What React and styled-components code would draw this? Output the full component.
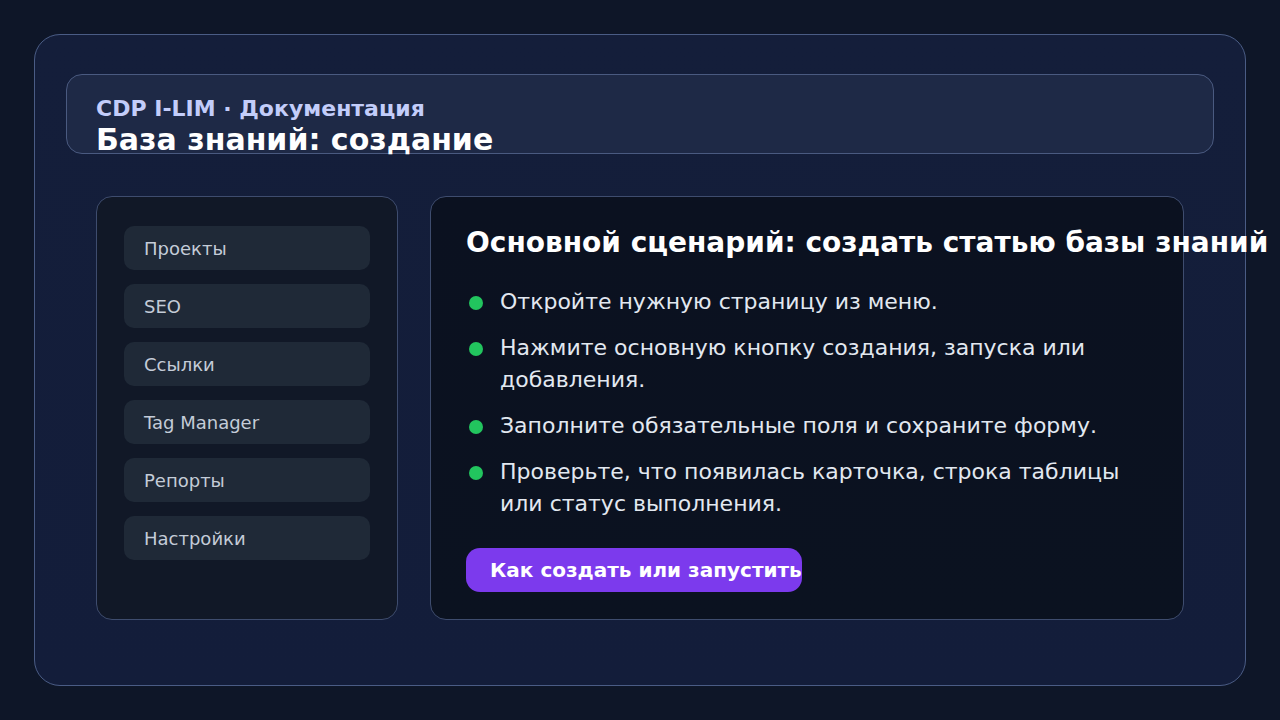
import React from 'react';
import styled, { createGlobalStyle } from 'styled-components';

const GlobalStyle = createGlobalStyle`
  html, body {
    margin: 0;
    padding: 0;
    background: #0e1628;
  }
  body {
    font-family: "DejaVu Sans", Verdana, sans-serif;
    width: 1280px;
    height: 720px;
    overflow: hidden;
  }
`;

const menu = ['Проекты', 'SEO', 'Ссылки', 'Tag Manager', 'Репорты', 'Настройки'];

const steps = [
  'Откройте нужную страницу из меню.',
  'Нажмите основную кнопку создания, запуска или добавления.',
  'Заполните обязательные поля и сохраните форму.',
  'Проверьте, что появилась карточка, строка таблицы или статус выполнения.',
];

export default function App() {
  return (
    <Page>
      <GlobalStyle />
      <Frame>
        <Header>
          <Crumb>CDP I-LIM · Документация</Crumb>
          <Title>База знаний: создание</Title>
        </Header>
        <Body>
          <Sidebar>
            {menu.map((item) => (
              <MenuItem key={item}>{item}</MenuItem>
            ))}
          </Sidebar>
          <Main>
            <Heading>Основной сценарий: создать статью базы знаний</Heading>
            <Steps>
              {steps.map((s) => (
                <Step key={s}>
                  <Dot />
                  <span>{s}</span>
                </Step>
              ))}
            </Steps>
            <Action>Как создать или запустить</Action>
          </Main>
        </Body>
      </Frame>
    </Page>
  );
}

const Page = styled.div`
  width: 1280px;
  height: 720px;
  padding: 34px;
  box-sizing: border-box;
`;

const Frame = styled.div`
  height: 652px;
  box-sizing: border-box;
  border: 1.5px solid #4a5c85;
  border-radius: 26px;
  background: linear-gradient(180deg, #141e3a 0%, #131d3a 100%);
  padding: 39px 31px 0;
  display: flex;
  flex-direction: column;
`;

const Header = styled.div`
  height: 80px;
  box-sizing: border-box;
  border: 1px solid #4a5a80;
  border-radius: 16px;
  background: #1e2946;
  padding: 22px 29px 0;
`;

const Crumb = styled.div`
  font-size: 22px;
  font-weight: bold;
  line-height: 24px;
  color: #c3cdfa;
  white-space: nowrap;
`;

const Title = styled.div`
  margin-top: 1px;
  font-size: 30px;
  font-weight: bold;
  line-height: 36px;
  color: #ffffff;
  white-space: nowrap;
`;

const Body = styled.div`
  margin-top: 42px;
  padding: 0 30px;
  display: flex;
  gap: 32px;
  height: 424px;
`;

const Sidebar = styled.div`
  flex: none;
  width: 302px;
  box-sizing: border-box;
  border: 1px solid #3e4c6e;
  border-radius: 16px;
  background: #111827;
  padding: 29px 27px;
  display: flex;
  flex-direction: column;
  gap: 14px;
`;

const MenuItem = styled.div`
  height: 44px;
  border-radius: 10px;
  background: #1f2937;
  display: flex;
  align-items: center;
  padding-left: 20px;
  font-size: 18px;
  color: #c4ccd8;
`;

const Main = styled.div`
  flex: 1;
  min-width: 0;
  box-sizing: border-box;
  border: 1px solid #3e4c6e;
  border-radius: 16px;
  background: linear-gradient(180deg, #0b1120 0%, #0b1220 100%);
  padding: 30px 35px;
  display: flex;
  flex-direction: column;
  align-items: flex-start;
`;

const Heading = styled.h2`
  margin: 0;
  font-size: 28px;
  font-weight: bold;
  line-height: 32px;
  color: #ffffff;
  white-space: nowrap;
`;

const Steps = styled.ul`
  list-style: none;
  margin: 27px 0 0;
  padding: 0;
  align-self: stretch;
  display: flex;
  flex-direction: column;
  gap: 14px;
`;

const Step = styled.li`
  display: flex;
  gap: 17px;
  font-size: 22px;
  line-height: 32px;
  color: #e2e8f0;
`;

const Dot = styled.i`
  flex: none;
  width: 14px;
  height: 14px;
  margin: 10px 0 0 3px;
  border-radius: 50%;
  background: #22c55e;
`;

const Action = styled.button`
  flex: none;
  margin-top: 28px;
  height: 44px;
  box-sizing: border-box;
  border: none;
  border-radius: 14px;
  background: #7c3aed;
  color: #ffffff;
  font-family: "DejaVu Sans", Verdana, sans-serif;
  font-size: 20px;
  font-weight: bold;
  padding: 0 0 0 24px;
  white-space: nowrap;
`;
